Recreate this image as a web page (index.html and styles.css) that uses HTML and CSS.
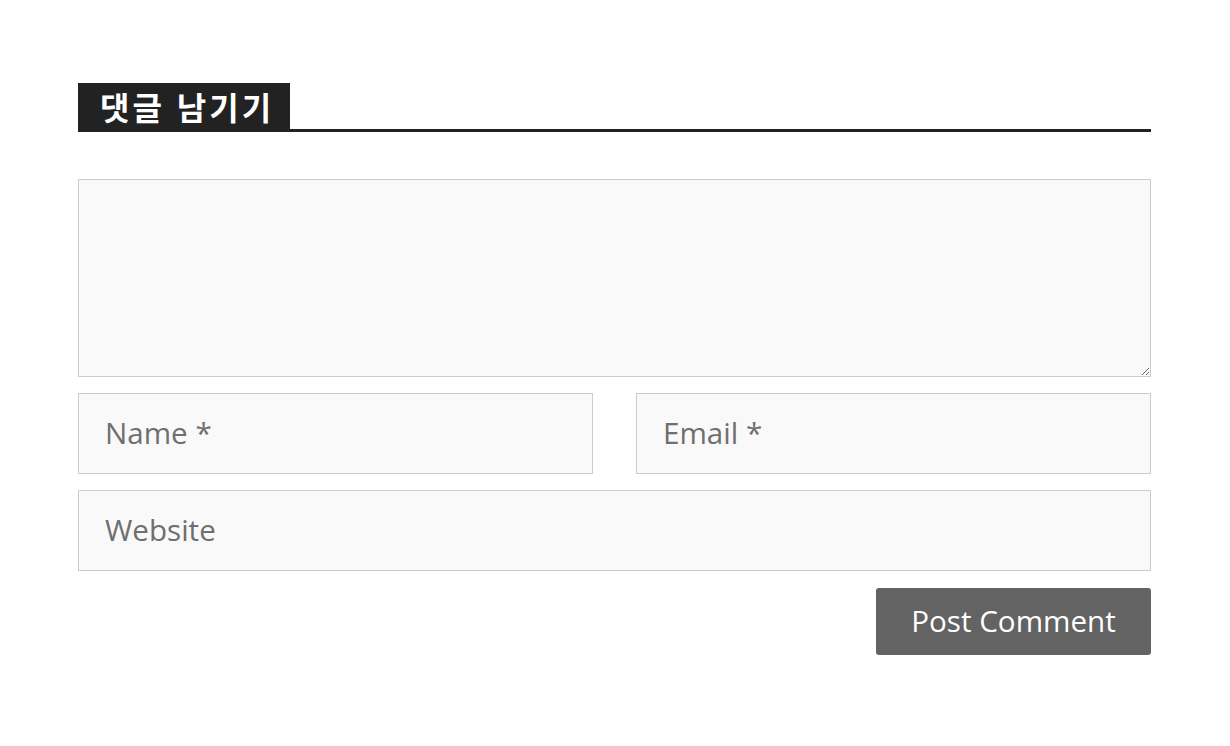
FILE: index.html
```html
<!DOCTYPE html>
<html lang="ko">
<head>
<meta charset="utf-8">
<link rel="stylesheet" href="styles.css">
</head>
<body>
<div class="wrap">
  <div class="heading"><h3 class="heading-label">댓글 남기기</h3></div>
  <form class="form">
    <textarea class="comment"></textarea>
    <div class="row">
      <input class="field" type="text" placeholder="Name *">
      <input class="field" type="text" placeholder="Email *">
    </div>
    <input class="field" type="text" placeholder="Website">
    <div class="actions"><button class="submit" type="button">Post Comment</button></div>
  </form>
</div>
</body>
</html>
```
FILE: styles.css
```css
html, body { margin: 0; padding: 0; background: #fff; }
body { font-family: "Open Sans", "Noto Sans", sans-serif; }
.wrap { padding: 83px 79px 0 78px; }
.heading { border-bottom: 3px solid #222; display: flex; }
.heading-label {
  margin: 0;
  background: #222;
  color: #fff;
  font-family: "Noto Sans CJK KR", "Noto Sans", sans-serif;
  font-weight: 700;
  font-size: 32px;
  letter-spacing: 3px;
  line-height: 46px;
  height: 46px;
  padding: 0 0 0 22px;
  width: 212px;
  box-sizing: border-box;
  white-space: nowrap;
}
.form { display: flex; flex-direction: column; gap: 16px; margin-top: 47px; }
.comment {
  box-sizing: border-box;
  height: 198px;
  width: 100%;
  border: 1px solid #ccc;
  background: #f9f9f9;
  resize: vertical;
  margin: 0;
  display: block;
}
.row { display: flex; gap: 43px; }
.row .field { flex: 1; min-width: 0; }
.field {
  box-sizing: border-box;
  height: 81px;
  border: 1px solid #ccc;
  background: #f9f9f9;
  padding: 0 0 3px 26px;
  font-family: "Open Sans", sans-serif;
  font-size: 29.6px;
  color: #666;
  margin: 0;
  outline: none;
}
.field::placeholder { color: #6f6f6f; opacity: 1; }
.actions { display: flex; justify-content: flex-end; margin-top: 1px; }
.submit {
  width: 275px;
  height: 67px;
  background: #636363;
  color: #fff;
  border: none;
  border-radius: 3px;
  font-family: "Open Sans", sans-serif;
  font-size: 29.6px;
  padding: 0 0 2px;
  cursor: pointer;
}
```
